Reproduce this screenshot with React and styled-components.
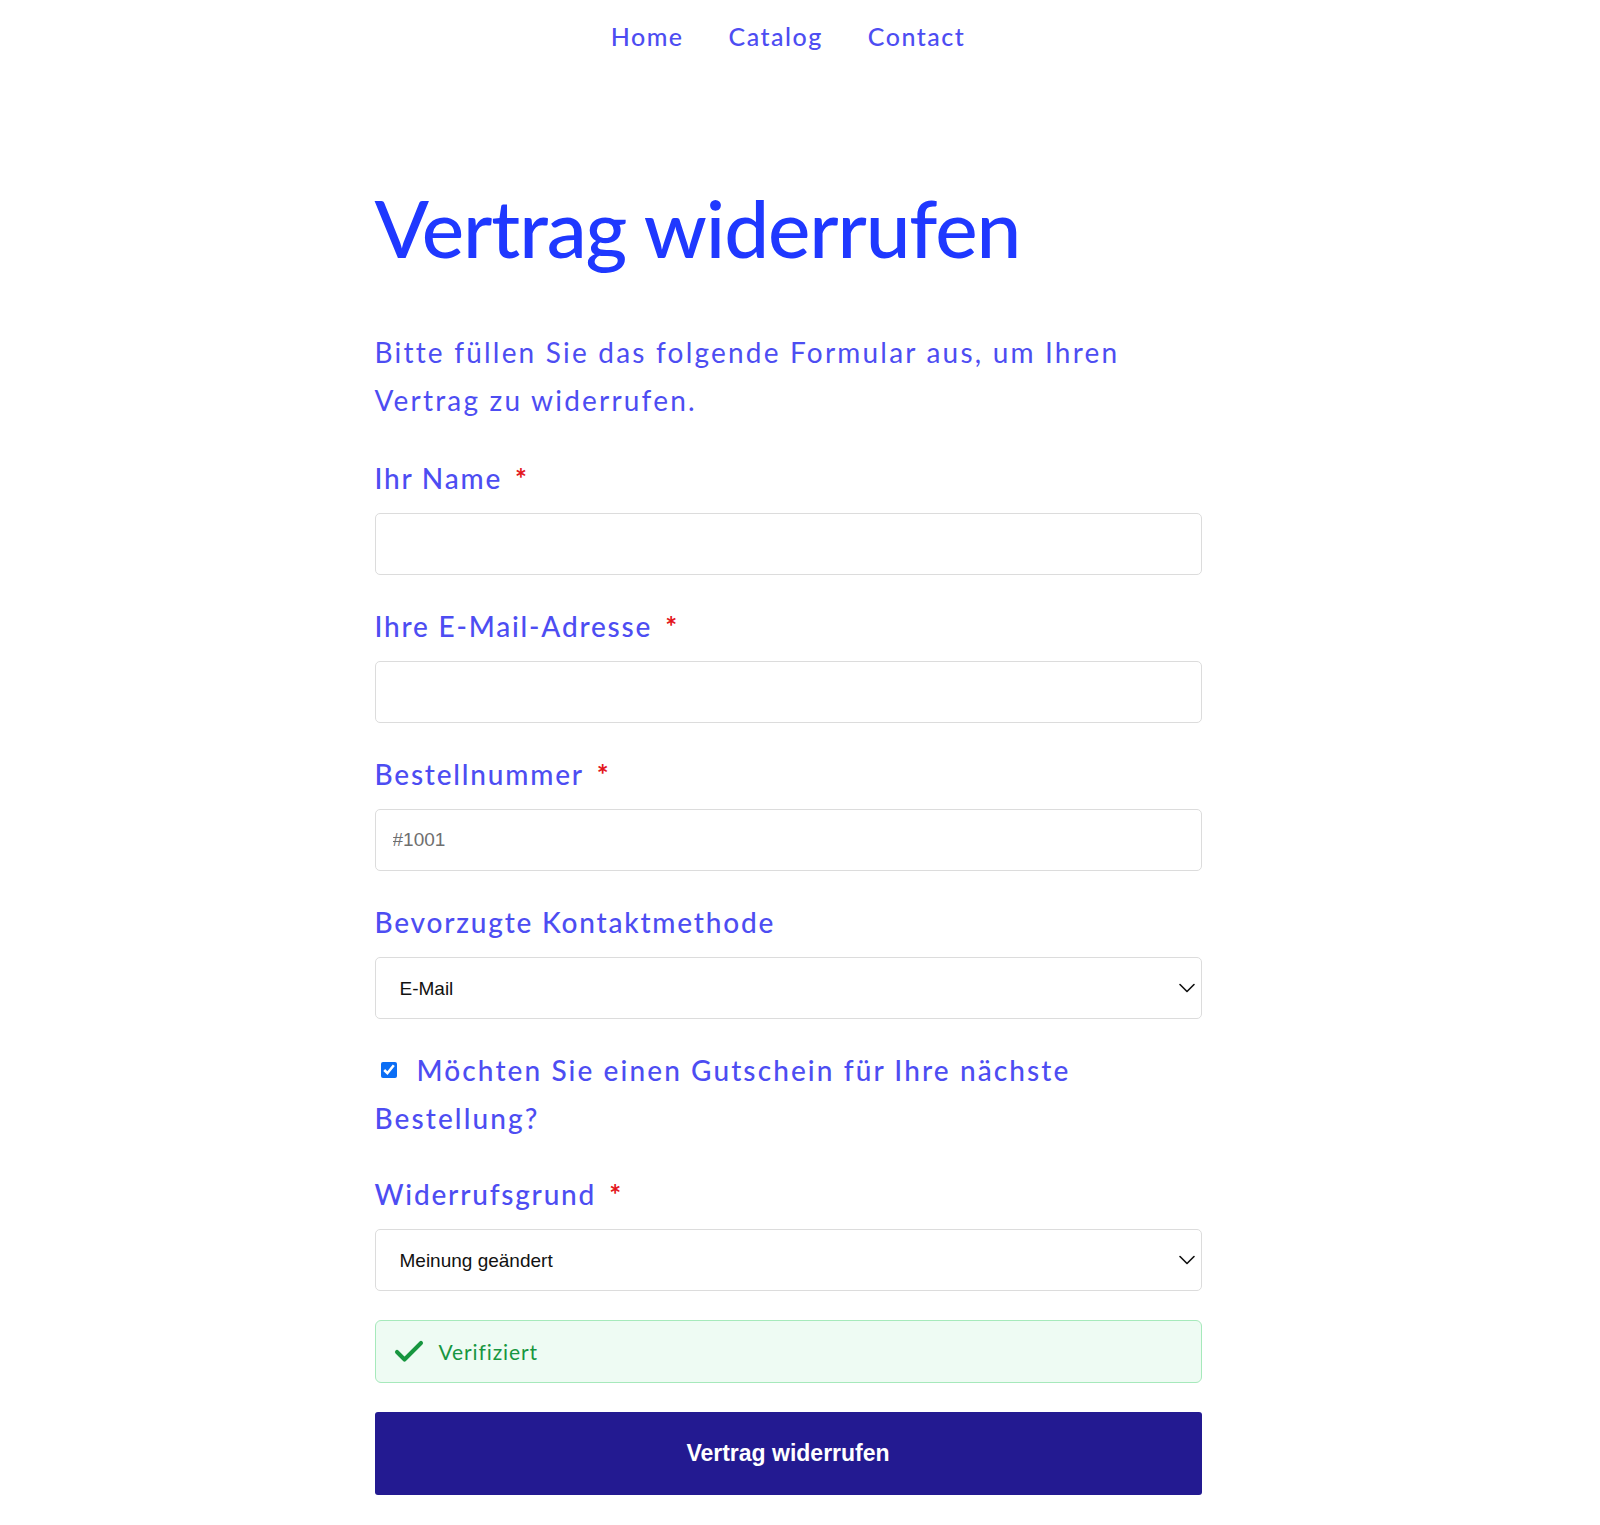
import React from "react";
import styled, { createGlobalStyle } from "styled-components";
import { Check, ChevronDown } from "lucide-react";

const GlobalStyle = createGlobalStyle`
  body {
    margin: 0;
    background: #ffffff;
    font-family: "Lato", "Open Sans", sans-serif;
  }
`;

const Page = styled.div`
  padding-right: 24px;
  padding-bottom: 32px;
`;

const Nav = styled.nav`
  height: 72px;
  display: flex;
  align-items: center;
  justify-content: center;
  gap: 45px;
`;

const NavLink = styled.a`
  color: #4d4df2;
  font-size: 25px;
  font-weight: 500;
  letter-spacing: 1.5px;
  text-decoration: none;
`;

const Container = styled.main`
  width: 827px;
  margin: 0 auto;
`;

const Title = styled.h1`
  margin: 105px 0 50px;
  color: #1f38ff;
  font-size: 80px;
  line-height: 101px;
  font-weight: 500;
  letter-spacing: -1.1px;
`;

const Intro = styled.p`
  margin: 0 0 34px;
  color: #4d4df2;
  font-size: 28px;
  line-height: 48px;
  letter-spacing: 2.2px;
`;

const Form = styled.form`
  display: flex;
  flex-direction: column;
`;

const Field = styled.div`
  display: flex;
  flex-direction: column;
  gap: 15px;
  margin-bottom: ${(p) => p.$space || "31px"};
`;

const Label = styled.label`
  color: #4d4df2;
  font-size: 28px;
  line-height: 40px;
  font-weight: 500;
  letter-spacing: 1.8px;
`;

const Required = styled.span`
  color: #e3161c;
  font-weight: 700;
  margin-left: 13px;
`;

const TextInput = styled.input`
  box-sizing: border-box;
  height: 62px;
  width: 100%;
  padding: 0 17px;
  border: 1px solid #dcdcdc;
  border-radius: 5px;
  font-family: "Liberation Sans", Arial, sans-serif;
  font-size: 19px;
  color: #222;
  outline: none;

  &::placeholder {
    color: #6f6f6f;
  }
`;

const SelectWrap = styled.div`
  position: relative;
`;

const Select = styled.select`
  box-sizing: border-box;
  appearance: none;
  height: 62px;
  width: 100%;
  padding: 0 24px;
  border: 1px solid #dcdcdc;
  border-radius: 5px;
  background: #ffffff;
  font-family: "Liberation Sans", Arial, sans-serif;
  font-size: 19px;
  color: #111;
  outline: none;
`;

const Chevron = styled(ChevronDown)`
  position: absolute;
  right: 1px;
  top: 50%;
  transform: translateY(-50%);
  pointer-events: none;
  color: #111;
`;

const CheckLabel = styled.label`
  margin-bottom: 32px;
  color: #4d4df2;
  font-size: 28px;
  line-height: 48px;
  font-weight: 500;
  letter-spacing: 2.1px;
`;

const Checkbox = styled.input`
  width: 16px;
  height: 16px;
  margin: 0 20px 0 6px;
  vertical-align: 3px;
  accent-color: #0b6ef5;
`;

const Verified = styled.div`
  box-sizing: border-box;
  height: 63px;
  margin-bottom: 29px;
  display: flex;
  align-items: center;
  gap: 12px;
  padding: 0 15px;
  border: 1px solid #a6e9bb;
  border-radius: 6px;
  background: #eefbf3;
  color: #17963f;
  font-size: 21px;
  letter-spacing: 0.9px;
`;

const SubmitButton = styled.button`
  height: 83px;
  width: 100%;
  border: none;
  border-radius: 3px;
  background: #231a91;
  color: #ffffff;
  font-family: "Liberation Sans", Arial, sans-serif;
  font-size: 23px;
  font-weight: 700;
  cursor: pointer;
`;

const fields = [
  { id: "name", label: "Ihr Name", required: true },
  { id: "email", label: "Ihre E-Mail-Adresse", required: true, type: "email" },
  { id: "order", label: "Bestellnummer", required: true, placeholder: "#1001" },
];

const App = () => {
  return (
    <Page>
      <GlobalStyle />
      <Nav>
        <NavLink href="#">Home</NavLink>
        <NavLink href="#">Catalog</NavLink>
        <NavLink href="#">Contact</NavLink>
      </Nav>
      <Container>
        <Title>Vertrag widerrufen</Title>
        <Intro>
          Bitte füllen Sie das folgende Formular aus, um Ihren Vertrag zu
          widerrufen.
        </Intro>
        <Form onSubmit={(e) => e.preventDefault()}>
          {fields.map((f) => (
            <Field key={f.id}>
              <Label htmlFor={f.id}>
                {f.label}
                {f.required && <Required>*</Required>}
              </Label>
              <TextInput
                id={f.id}
                type={f.type || "text"}
                placeholder={f.placeholder}
              />
            </Field>
          ))}
          <Field $space="27px">
            <Label htmlFor="contact">Bevorzugte Kontaktmethode</Label>
            <SelectWrap>
              <Select id="contact" defaultValue="email">
                <option value="email">E-Mail</option>
                <option value="phone">Telefon</option>
              </Select>
              <Chevron size={28} strokeWidth={1.4} />
            </SelectWrap>
          </Field>
          <CheckLabel>
            <Checkbox type="checkbox" defaultChecked />
            Möchten Sie einen Gutschein für Ihre nächste Bestellung?
          </CheckLabel>
          <Field $space="29px">
            <Label htmlFor="reason">
              Widerrufsgrund
              <Required>*</Required>
            </Label>
            <SelectWrap>
              <Select id="reason" defaultValue="mind">
                <option value="mind">Meinung geändert</option>
                <option value="defect">Artikel defekt</option>
                <option value="other">Sonstiges</option>
              </Select>
              <Chevron size={28} strokeWidth={1.4} />
            </SelectWrap>
          </Field>
          <Verified>
            <Check size={36} strokeWidth={2.7} />
            Verifiziert
          </Verified>
          <SubmitButton type="submit">Vertrag widerrufen</SubmitButton>
        </Form>
      </Container>
    </Page>
  );
};

export default App;
